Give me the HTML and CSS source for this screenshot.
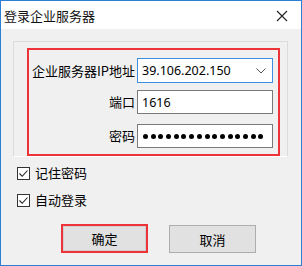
FILE: index.html
```html
<!DOCTYPE html>
<html lang="zh-CN">
<head>
<meta charset="utf-8">
<link rel="stylesheet" href="styles.css">
</head>
<body>
<div class="window">
  <div class="titlebar">
    <span class="title">登录企业服务器</span>
    <svg class="close" width="12" height="12" viewBox="0 0 12 12"><path d="M1 1 L11 11 M11 1 L1 11" stroke="#222" stroke-width="1.1" fill="none"/></svg>
  </div>
  <div class="content">
    <div class="group">
      <div class="highlight">
        <div class="row row-ip">
          <span class="label">企业服务器IP地址</span>
          <div class="field combo"><span class="value">39.106.202.150</span>
            <svg class="arrow" width="10" height="6" viewBox="0 0 10 6"><path d="M0.5 0.5 L5 5 L9.5 0.5" stroke="#555" stroke-width="1" fill="none"/></svg>
          </div>
        </div>
        <div class="row row-port">
          <span class="label">端口</span>
          <div class="field"><span class="value">1616</span></div>
        </div>
        <div class="row row-pwd">
          <span class="label">密码</span>
          <div class="field dots">
            <i></i><i></i><i></i><i></i><i></i><i></i><i></i><i></i><i></i><i></i><i></i><i></i><i></i><i></i><i></i><i></i>
          </div>
        </div>
      </div>
    </div>
    <div class="checks">
      <label class="check"><span class="box"><svg width="11" height="11" viewBox="0 0 11 11"><path d="M1.5 5.5 L4.2 8.3 L9.5 2.5" stroke="#222" stroke-width="1.1" fill="none"/></svg></span>记住密码</label>
      <label class="check"><span class="box"><svg width="11" height="11" viewBox="0 0 11 11"><path d="M1.5 5.5 L4.2 8.3 L9.5 2.5" stroke="#222" stroke-width="1.1" fill="none"/></svg></span>自动登录</label>
    </div>
    <div class="buttons">
      <button class="btn btn-ok">确定</button>
      <button class="btn btn-cancel">取消</button>
    </div>
  </div>
</div>
</body>
</html>
```

FILE: styles.css
```css
* { box-sizing: border-box; }
html, body { margin: 0; padding: 0; }
body {
  width: 302px;
  height: 266px;
  font-family: "Noto Sans CJK SC", sans-serif;
  font-size: 13px;
  color: #000;
  background: #fff;
}
.window {
  width: 302px;
  height: 266px;
  border: 1px solid #2b7fd4;
  display: flex;
  flex-direction: column;
}
.titlebar {
  height: 28px;
  background: #fff;
  display: flex;
  align-items: center;
  justify-content: space-between;
  padding: 0 13px 0 3px;
  flex-shrink: 0;
}
.title {
  font-size: 13px;
  line-height: 14px;
  color: #111;
  letter-spacing: 0;
  margin-top: 1px;
}
.close { margin-top: 1px; }
.content {
  flex: 1;
  background: #f0f0f0;
  padding: 12px 13px 0 12px;
}
.group {
  height: 116px;
  border: 1px solid #dcdcdc;
  border-bottom-color: #fff;
  padding: 6px 7px 0 13px;
}
.highlight {
  height: 108px;
  border: 2px solid #ee3338;
  padding: 8px 5px 0 2px;
}
.row {
  display: flex;
  align-items: center;
  justify-content: flex-end;
}
.row-ip { height: 25px; }
.row-port { height: 24px; margin-top: 7px; }
.row-pwd { height: 24px; margin-top: 10px; }
.label {
  margin-right: 2px;
  white-space: nowrap;
  line-height: 14px;
}
.field {
  width: 136px;
  height: 100%;
  background: #fff;
  border: 1px solid #7a7a7a;
  display: flex;
  align-items: center;
  padding: 0 4px;
  font-family: "Noto Sans", sans-serif;
  font-size: 12.5px;
}
.combo {
  border-color: #3c8fe0;
  justify-content: space-between;
  padding-right: 6px;
}
.value { line-height: 15px; }
.arrow { margin-top: 1px; }
.dots {
  padding-left: 5px;
  gap: 2.7px;
}
.dots i {
  display: block;
  width: 5px;
  height: 5px;
  border-radius: 50%;
  background: #000;
}
.checks {
  margin-top: 9px;
  padding-left: 4px;
  display: flex;
  flex-direction: column;
  gap: 13px;
}
.check {
  display: flex;
  align-items: center;
  height: 14px;
  line-height: 14px;
}
.box {
  width: 13px;
  height: 13px;
  border: 1px solid #333;
  background: #fff;
  display: flex;
  align-items: center;
  justify-content: center;
  margin-right: 5px;
}
.buttons {
  display: flex;
  margin-top: 18px;
  padding-left: 48px;
  gap: 21px;
}
.btn {
  width: 87px;
  height: 28px;
  background: #e1e1e1;
  border: 1px solid #adadad;
  font-family: "Noto Sans CJK SC", sans-serif;
  font-size: 13px;
  color: #000;
  padding: 0;
  margin: 0;
}
.btn-ok {
  border: 2px solid #ee3338;
  box-shadow: inset 0 0 0 1px #d0d0d0;
  height: 29px;
  margin-top: -1px;
}
```
